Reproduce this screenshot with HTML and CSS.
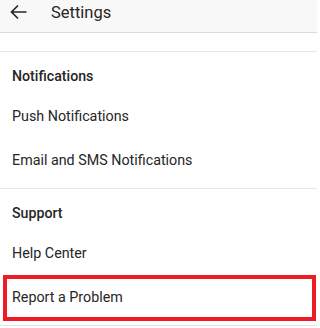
FILE: index.html
```html
<!DOCTYPE html>
<html>
<head>
<meta charset="utf-8">
<link rel="stylesheet" href="styles.css">
</head>
<body>
<div class="screen">
  <header class="topbar">
    <svg class="back" width="18" height="16" viewBox="0 0 18 16" aria-hidden="true">
      <path d="M1.5 8 H16.5 M8 1.5 L1.5 8 L8 14.5" fill="none" stroke="#262626" stroke-width="1.7" stroke-linecap="butt" stroke-linejoin="miter"/>
    </svg>
    <span class="title">Settings</span>
  </header>
  <div class="spacer"></div>
  <section class="group">
    <div class="group-title">Notifications</div>
    <div class="item">Push Notifications</div>
    <div class="item">Email and SMS Notifications</div>
  </section>
  <section class="group">
    <div class="group-title">Support</div>
    <div class="item">Help Center</div>
    <div class="item highlighted">Report a Problem</div>
  </section>
</div>
</body>
</html>
```

FILE: styles.css
```css
html, body {
  margin: 0;
  padding: 0;
  background: #ffffff;
}
body {
  font-family: Roboto, "Noto Sans", "Liberation Sans", sans-serif;
  color: #262626;
  overflow: hidden;
}
.screen {
  width: 317px;
}
.topbar {
  height: 32px;
  background: #f8f8f8;
  border-bottom: 1px solid #dbdbdb;
  display: flex;
  align-items: center;
  padding-left: 10px;
  box-sizing: content-box;
}
.back {
  display: block;
  margin-top: -8px;
}
.title {
  margin-left: 23px;
  font-size: 16.5px;
  margin-top: -8px;
  color: #262626;
}
.spacer {
  height: 18px;
  border-bottom: 1px solid #e6e6e6;
}
.group {
  padding-bottom: 6px;
  border-bottom: 1px solid #e6e6e6;
}
.group-title {
  padding: 14px 12px 8px;
  font-size: 14.2px;
  line-height: 20px;
  font-weight: 500;
}
.item {
  padding: 12px 12px;
  font-size: 14.3px;
  line-height: 20px;
  position: relative;
}
.highlighted::after {
  content: "";
  position: absolute;
  top: 0;
  bottom: -2px;
  left: 3px;
  right: 1px;
  border: 4px solid #ed1c24;
}
```
